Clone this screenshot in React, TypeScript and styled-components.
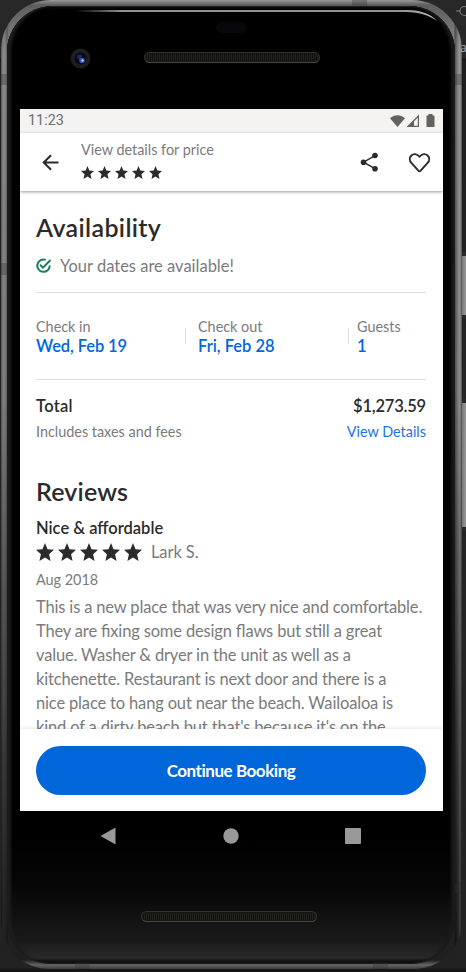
import React from 'react';
import styled, { createGlobalStyle } from 'styled-components';

const Global = createGlobalStyle`
  * { box-sizing: border-box; }
  html, body { margin: 0; padding: 0; background: #232323; }
  body { width: 466px; height: 972px; overflow: hidden; font-family: Lato, "Open Sans", sans-serif; }
  svg { display: block; flex: none; }
`;

const Desk = styled.main`
  position: relative;
  width: 466px;
  height: 972px;
  padding: 0 4px 3px 1px;
  overflow: hidden;
  background: linear-gradient(#282828 0, #262626 58px, #111 59px, #1d1d1d 62px, #242424 400px, #222 968px, #171318 970px);
`;

const Shell = styled.div`
  height: 969px;
  padding: 6px 7px 5px 6px;
  border-radius: 50px 50px 48px 48px;
  background:
    linear-gradient(90deg, #0005 0, #0000 2px, #0000 4px, #0004 6px, #0000 8px, #0000 453px, #0006 454px, #0000 457px, #fff2 459px, #0006 461px),
    linear-gradient(#999 0, #5d5d5d 5px, #888 50px, #7c7c7c 400px, #5e5e5e 540px, #3a3a3a 750px, #262626 890px, #1f1f1f 960px, #656565 965px, #3c3c3c 969px);
`;

const Glass = styled.div`
  display: flex;
  flex-direction: column;
  height: 958px;
  padding: 0 12px 0 13px;
  border-radius: 46px 46px 44px 44px;
  background: linear-gradient(#000 830px, #060606 880px, #1a1a1a 935px, #2a2a2a 952px, #111 955px);
  box-shadow: inset 0 0 0 1px #1c1c1c, inset 6px 0 3px -2px #1e1e1e, inset -6px 0 3px -2px #1a1a1a, inset 0 3px 1px #080808;
`;

const Forehead = styled.div`
  position: relative;
  flex: none;
  height: 103px;
`;

const Glint = styled.svg`
  position: absolute;
  left: 40px;
  top: 3px;
`;

const Sensor = styled.div`
  position: absolute;
  left: 196px;
  top: 16px;
  width: 30px;
  height: 11px;
  border-radius: 6px;
  background: #07080c;
`;

const Camera = styled.svg`
  position: absolute;
  left: 50px;
  top: 42px;
`;

const Grille = styled.div<{ $left: number; $top: number }>`
  position: absolute;
  left: ${p => p.$left}px;
  top: ${p => p.$top}px;
  width: 176px;
  height: 11px;
  border: 1px solid #343432;
  border-bottom-color: #474745;
  border-radius: 6px;
  background: repeating-linear-gradient(90deg, #24231f 0 1px, #11110f 1px 2px);
  box-shadow: inset 0 0 0 1px #151513;
`;

const Screen = styled.div`
  display: flex;
  flex-direction: column;
  flex: none;
  width: 423px;
  height: 702px;
  overflow: hidden;
  background: #fff;
`;

const StatusBar = styled.div`
  display: flex;
  flex: none;
  align-items: center;
  justify-content: space-between;
  height: 24px;
  padding: 0 7px 0 8px;
  background: #f4f3f2;
  color: #6e6e6d;
  font: 14.4px/24px Roboto, sans-serif;
`;

const AppBar = styled.header`
  position: relative;
  display: flex;
  flex: none;
  height: 58px;
  padding: 0 12px 0 20px;
  background: #fff;
  box-shadow: 0 1px 3px #0006;
`;

const AppBarTitle = styled.div`
  flex: 1;
  margin-left: 20px;
  padding-top: 8px;
`;

const AppBarIcon = styled.div<{ $gap?: number }>`
  display: flex;
  align-items: center;
  margin-left: ${p => p.$gap ?? 0}px;
`;

const Scroll = styled.section`
  flex: 1;
  min-height: 0;
  padding: 0 17px 0 16px;
  overflow: hidden;
`;

const Text = styled.div<{ $size: number; $line: number; $weight?: number; $color?: string; $track?: number }>`
  margin: 0;
  font-size: ${p => p.$size}px;
  line-height: ${p => p.$line}px;
  font-weight: ${p => p.$weight ?? 400};
  color: ${p => p.$color ?? '#7b7b7b'};
  letter-spacing: ${p => p.$track ?? 0}px;
  white-space: nowrap;
`;

const ReviewLine = styled.div`
  color: #7b7b7b;
  font-size: 16.5px;
  line-height: 24px;
  letter-spacing: -0.16px;
  font-feature-settings: "liga" 1;
  white-space: nowrap;
`;

const Notice = styled.div`
  display: flex;
  align-items: center;
  gap: 8px;
  height: 24px;
  margin-top: 11px;
`;

const Rule = styled.hr`
  height: 1px;
  margin: 0;
  border: 0;
  background: #dcdcdc;
`;

const Dates = styled.div`
  display: grid;
  grid-template-columns: 149px 163px 1fr;
  align-items: center;
  height: 86px;
`;

const DateCell = styled.div<{ $inset?: number; $divided?: boolean }>`
  display: flex;
  flex-direction: column;
  justify-content: center;
  height: 40px;
  padding-left: ${p => p.$inset ?? 0}px;
  background: ${p => (p.$divided ? 'linear-gradient(#ddd, #ddd) 0 12px / 1px 16px no-repeat' : 'none')};
`;

const Row = styled.div`
  display: flex;
  align-items: center;
  justify-content: space-between;
`;

const Block = styled.div<{ $top: number }>`
  margin-top: ${p => p.$top}px;
`;

const Stars = styled.div<{ $gap: number }>`
  display: flex;
  gap: ${p => p.$gap}px;
`;

const Author = styled.div`
  display: flex;
  align-items: center;
  gap: 9px;
  height: 24px;
`;

const Footer = styled.footer`
  position: relative;
  flex: none;
  height: 82px;
  padding: 17px 17px 0 16px;
  background: #fff;
  box-shadow: 0 -1px 3px #0000001c;
`;

const BookButton = styled.button`
  display: block;
  width: 390px;
  height: 49px;
  padding: 0;
  border: 0;
  border-radius: 25px;
  background: #0067db;
  color: #fff;
  font: 700 17px/48px Lato, sans-serif;
  letter-spacing: -0.45px;
`;

const Nav = styled.nav`
  display: flex;
  flex: none;
  align-items: center;
  justify-content: space-between;
  width: 423px;
  height: 49px;
  padding: 0 82px 0 79px;
`;

const Chin = styled.div`
  position: relative;
  flex: 1;
`;

const SideKey = styled.i<{ $top: number; $height: number }>`
  position: absolute;
  left: 462px;
  top: ${p => p.$top}px;
  width: 4px;
  height: ${p => p.$height}px;
  border: solid #292929;
  border-width: 4px 0;
  background: linear-gradient(90deg, #777, #999);
`;

const AntennaBand = styled.i<{ $left: number; $top: number; $w: number; $h: number }>`
  position: absolute;
  left: ${p => p.$left}px;
  top: ${p => p.$top}px;
  width: ${p => p.$w}px;
  height: ${p => p.$h}px;
  background: #3335;
  box-shadow: 0 0 0 1px #2224;
`;

const WindowEdge = styled.div`
  position: absolute;
  left: 460px;
  top: 40px;
  width: 6px;
  overflow: hidden;
  color: #b0b0b0;
  font: 12px/16px "Open Sans", sans-serif;
`;

const WindowIcon = styled.svg`
  position: absolute;
  left: 455px;
  top: 4px;
`;

const Star = ({ size }: { size: number }) => (
  <svg width={size} height={size} viewBox="2 2 20 19" preserveAspectRatio="none">
    <path fill="#2b2b2b" d="M12 17.27 18.18 21l-1.64-7.03L22 9.24l-7.19-.61L12 2 9.19 8.63 2 9.24l5.46 4.73L5.82 21z" />
  </svg>
);

const REVIEW = [
  'This is a new place that was very nice and comfortable.',
  'They are fixing some design flaws but still a great',
  'value. Washer & dryer in the unit as well as a',
  'kitchenette. Restaurant is next door and there is a',
  'nice place to hang out near the beach. Wailoaloa is',
  "kind of a dirty beach but that's because it's on the",
];

const dark = '#2b2b2b';
const blue = '#0067db';

export default function App() {
  return (
    <>
      <Global />
      <Desk>
        <WindowIcon width="11" height="16" viewBox="0 0 11 16" fill="none" stroke="#777" strokeWidth="1.2">
          <path d="M1 7h4" /><circle cx="9.500" cy="7" r="4.500" />
        </WindowIcon>
        <SideKey $top={252} $height={67} />
        <SideKey $top={399} $height={132} />
        <Shell>
          <Glass>
            <Forehead>
              <Glint width="380" height="24" viewBox="0 0 380 24">
                <defs>
                  <linearGradient id="glint" x1="0" x2="1">
                    <stop offset="0" stopColor="#8d9494" stopOpacity="0" />
                    <stop offset=".13" stopColor="#8d9494" />
                    <stop offset=".9" stopColor="#8d9494" />
                    <stop offset="1" stopColor="#b5bbbb" />
                  </linearGradient>
                </defs>
                <path fill="url(#glint)" d="M15 1H348C361 1 371 5 377 12C369 6 360 3.500 346 3H15z" />
              </Glint>
              <Sensor />
              <Camera width="21" height="21" viewBox="0 0 21 21">
                <circle cx="10.500" cy="10.500" r="10" fill="#1f1e1e" />
                <circle cx="10.500" cy="10.500" r="6" fill="#080a18" />
                <circle cx="9.500" cy="9" r="2.500" fill="#1b2962" />
                <circle cx="12" cy="12.500" r="2.800" fill="#3350b2" />
                <circle cx="12.500" cy="12.500" r="1.200" fill="#b9c8ff" />
              </Camera>
              <Grille $left={124} $top={46} />
            </Forehead>

            <Screen>
              <StatusBar>
                <span>11:23</span>
                <svg width="46" height="16" viewBox="0 0 46 16">
                  <path fill="#62625f" d="M0 5.300C4.500 1.200 10.500 1.200 15 5.300L7.500 14z" />
                  <path fill="#62625f" d="M16.500 14 29 1.500V14zM24 8.500V12.800H27.800V4.600z" fillRule="evenodd" />
                  <path fill="#62625f" d="M38.500 1h4v1.500H44q.5 0 .5.500v10.500q0 .5-.5.500h-7q-.5 0-.5-.5V3q0-.5.500-.5h1.500z" />
                </svg>
              </StatusBar>

              <AppBar>
                <AppBarIcon>
                  <svg width="21" height="20" viewBox="0 0 21 20" fill="none" stroke={dark} strokeWidth="2">
                    <path d="M18.500 10.500H4M11 3.200 3.700 10.500 11 17.800" />
                  </svg>
                </AppBarIcon>
                <AppBarTitle>
                  <Text $size={14.4} $line={18}>View details for price</Text>
                  <Block $top={7}>
                    <Stars $gap={4}>{[0, 1, 2, 3, 4].map(i => <Star key={i} size={13} />)}</Stars>
                  </Block>
                </AppBarTitle>
                <AppBarIcon>
                  <svg width="20" height="22" viewBox="0 0 20 22" fill={dark} stroke={dark}>
                    <path fill="none" strokeWidth="1.500" d="M15 4.700 3.500 11.200 15 17.700" />
                    <g stroke="none"><circle cx="15" cy="4.500" r="2.800" /><circle cx="3.500" cy="11.200" r="2.800" /><circle cx="15" cy="17.800" r="2.800" /></g>
                  </svg>
                </AppBarIcon>
                <AppBarIcon $gap={28}>
                  <svg width="23" height="22" viewBox="0 0 24 23" fill="none" stroke={dark} strokeWidth="2" strokeLinejoin="round">
                    <path d="M12 5C9.300 1.600 5.700 1.600 3.500 3.700 1.300 5.900 1.400 9.200 3.500 11.500L10.800 19.500Q12 20.700 13.200 19.500L20.500 11.500C22.600 9.200 22.700 5.900 20.500 3.700 18.300 1.600 14.700 1.600 12 5z" transform="translate(0 1)" />
                  </svg>
                </AppBarIcon>
              </AppBar>

              <Scroll>
                <Block $top={20}>
                  <Text as="h2" $size={25} $line={32} $weight={600} $color={dark} $track={0.35}>Availability</Text>
                </Block>
                <Notice>
                  <svg width="16" height="16" viewBox="0 0 16 16" fill="none" stroke="#178159" strokeWidth="2">
                    <path d="M9.800 1.900A6.200 6.200 0 1 0 13.700 7.500M4 6.700 7 9.700 14.500 2" />
                  </svg>
                  <Text $size={16.5} $line={24}>Your dates are available!</Text>
                </Notice>
                <Block $top={14}><Rule /></Block>
                <Dates>
                  <DateCell>
                    <Text $size={14.4} $line={19}>Check in</Text>
                    <Text $size={16.5} $line={20} $weight={600} $color={blue} $track={-0.1}>Wed, Feb 19</Text>
                  </DateCell>
                  <DateCell $inset={13} $divided>
                    <Text $size={14.4} $line={19}>Check out</Text>
                    <Text $size={16.5} $line={20} $weight={600} $color={blue}>Fri, Feb 28</Text>
                  </DateCell>
                  <DateCell $inset={9} $divided>
                    <Text $size={14.4} $line={19}>Guests</Text>
                    <Text $size={16.5} $line={20} $weight={600} $color={blue}>1</Text>
                  </DateCell>
                </Dates>
                <Rule />
                <Block $top={15}>
                  <Row>
                    <Text $size={16.5} $line={22} $weight={600} $color={dark} $track={0.3}>Total</Text>
                    <Text $size={16.5} $line={22} $weight={600} $color={dark} $track={-0.2}>$1,273.59</Text>
                  </Row>
                </Block>
                <Block $top={4}>
                  <Row>
                    <Text $size={14.4} $line={22}>Includes taxes and fees</Text>
                    <Text $size={14.4} $line={22} $color="#1f74de">View Details</Text>
                  </Row>
                </Block>
                <Block $top={32}>
                  <Text as="h2" $size={25} $line={32} $weight={600} $color={dark} $track={0.15}>Reviews</Text>
                </Block>
                <Block $top={10}>
                  <Text $size={16.5} $line={22} $weight={600} $color={dark}>Nice &amp; affordable</Text>
                </Block>
                <Block $top={1}>
                  <Author>
                    <Stars $gap={4}>{[0, 1, 2, 3, 4].map(i => <Star key={i} size={18} />)}</Stars>
                    <Text $size={16.5} $line={24} $track={-0.1}>Lark S.</Text>
                  </Author>
                </Block>
                <Block $top={6}><Text $size={14.4} $line={20}>Aug 2018</Text></Block>
                <Block $top={5}>
                  {REVIEW.map(line => <ReviewLine key={line}>{line}</ReviewLine>)}
                </Block>
              </Scroll>

              <Footer><BookButton>Continue Booking</BookButton></Footer>
            </Screen>

            <Nav>
              <svg width="18" height="20" viewBox="0 0 18 20" fill="#999"><path d="M16.500 1.500v17L1.500 10z" /></svg>
              <svg width="16" height="16" viewBox="0 0 16 16" fill="#999"><circle cx="8" cy="8" r="7.700" /></svg>
              <svg width="16" height="16" viewBox="0 0 16 16" fill="#999"><rect width="16" height="16" rx="1" /></svg>
            </Nav>
            <Chin><Grille $left={121} $top={51} /></Chin>
          </Glass>
        </Shell>
        <AntennaBand $left={1} $top={75} $w={6} $h={9} />
        <AntennaBand $left={1} $top={264} $w={6} $h={10} />
        <AntennaBand $left={455} $top={75} $w={6} $h={9} />
        <AntennaBand $left={353} $top={1} $w={13} $h={5} />
        <AntennaBand $left={455} $top={884} $w={6} $h={9} />
        <AntennaBand $left={76} $top={963} $w={13} $h={5} />
        <AntennaBand $left={374} $top={963} $w={13} $h={5} />
        <WindowEdge>a</WindowEdge>
      </Desk>
    </>
  );
}
